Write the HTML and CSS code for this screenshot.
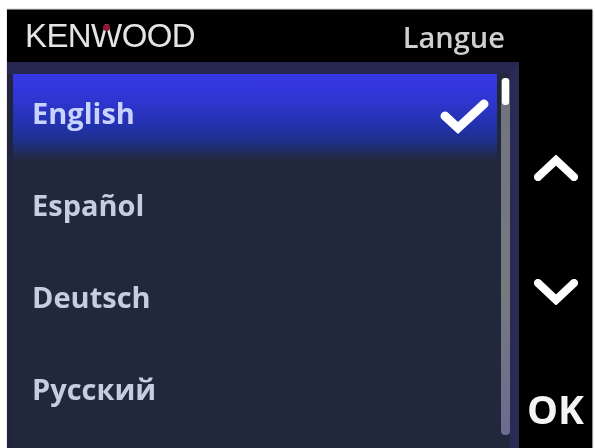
FILE: index.html
```html
<!DOCTYPE html>
<html lang="fr">
<head>
<meta charset="utf-8">
<title>Langue</title>
<link rel="stylesheet" href="styles.css">
</head>
<body>
<div class="screen">
  <div class="main">
    <header class="header">
      <span class="brand">KEN<span class="brand-w">W<i class="brand-dot"></i></span>OOD</span>
      <span class="title">Langue</span>
    </header>
    <div class="panel">
      <ul class="list">
        <li class="row selected"><span>English</span>
          <svg class="check" viewBox="0 0 50 38"><path d="M6 19 L19 31 L45 7" /></svg>
        </li>
        <li class="row"><span>Español</span></li>
        <li class="row"><span>Deutsch</span></li>
        <li class="row"><span>Русский</span></li>
      </ul>
      <div class="track"><div class="thumb"></div></div>
    </div>
  </div>
  <aside class="side">
    <svg class="chev up" viewBox="0 0 44 26"><path d="M4 22 L22 5 L40 22" /></svg>
    <svg class="chev down" viewBox="0 0 44 26"><path d="M4 4 L22 21 L40 4" /></svg>
    <span class="ok">OK</span>
  </aside>
</div>
</body>
</html>
```
FILE: styles.css
```css
* { box-sizing: border-box; }
html, body { margin: 0; height: 100%; background: #fff; overflow: hidden; }
body { padding: 10px 3px 0 7px; font-family: "Open Sans", "Noto Sans", sans-serif; }
.screen { display: flex; height: 438px; background: #000; box-shadow: 0 -1px 1px #777, 1px 0 1px #999; }
.main { width: 512px; display: flex; flex-direction: column; }
.header { height: 52px; display: flex; justify-content: space-between; align-items: center; padding: 0 14px 0 18px; flex: none; }
.brand { font-family: "Liberation Sans", sans-serif; font-size: 33px; letter-spacing: -0.6px; color: #e4e4e4; filter: blur(0.7px); margin-top: 0; }
.brand-w { position: relative; }
.brand-dot { position: absolute; left: 12px; top: 7px; width: 7px; height: 7px; border-radius: 50%; background: #8f1530; }
.title { font-size: 29px; font-weight: 600; color: #cfcfcf; filter: blur(0.7px); margin-top: 0; }
.panel { flex: 1; display: flex; background: #22283b; border-top: 12px solid #262650; border-right: 9px solid #2a2a52; box-shadow: inset 6px 0 0 #20243c; }
.list { list-style: none; margin: 0; padding: 0 0 0 6px; flex: 1; min-width: 0; }
.row { height: 92px; display: flex; align-items: center; justify-content: space-between; padding: 0 8px 16px 19px; font-size: 29px; font-weight: 700; color: #c6cde0; }
.row span { filter: blur(0.7px); }
.selected { background: linear-gradient(#3636e6 0%, #2f35cf 30%, #2031a6 60%, #1e2f86 74%, #22283b 94%); color: #c8d4ff; }
.check { width: 50px; height: 38px; margin-top: 8px; filter: blur(0.5px); }
.check path, .chev path { fill: none; stroke: #fff; stroke-width: 8; stroke-linecap: round; stroke-linejoin: miter; }
.check path { stroke-width: 9; }
.track { width: 9px; margin: 4px 0 13px 4px; background: linear-gradient(#6f7480, #77797f 60%, #6a6c90); border-radius: 4px; flex: none; filter: blur(0.5px); }
.thumb { width: 7px; height: 27px; margin: 0 auto; background: #fff; border-radius: 3px; }
.side { flex: 1; display: flex; flex-direction: column; align-items: center; padding-top: 145px; }
.chev { width: 44px; height: 26px; flex: none; filter: blur(0.5px); }
.down { margin-top: 98px; }
.ok { font-size: 39px; line-height: 40px; font-weight: 700; color: #f4f4f4; margin-top: 84px; filter: blur(0.5px); }
```
